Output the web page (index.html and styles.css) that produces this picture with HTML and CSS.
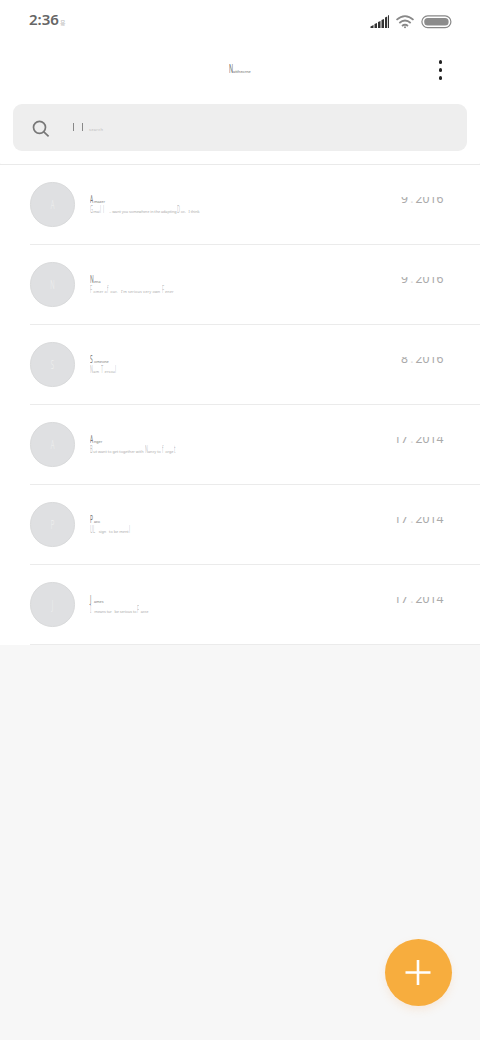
FILE: index.html
```
<!DOCTYPE html>
<html lang="en">
<head>
<meta charset="utf-8">
<title>Notes</title>
<link rel="stylesheet" href="styles.css">
</head>
<body>
<div class="status">
  <div class="time">2:36<small>용</small></div>
  <svg class="status-icons" width="82" height="16" viewBox="0 0 82 16">
    <path class="signal" d="M.500 14v-1.500l3-1.500v3zM4.500 14v-4l2.500-1v5zM8 14V8l2.500-1v7zM11.500 14V6l2.500-1v9zM15 14V3.500l2.200-1V14zM18 14V1.500l1-.5V14z"/>
    <g class="wifi"><path d="M26.500 5.800q8.500-7.500 17 0M29.300 9q5.700-5 11.400 0M32 12q3-2.500 6 0"/><circle cx="35" cy="13.300" r="1"/></g>
    <rect class="battery" x="51.900" y="1.900" width="29" height="11.700" rx="5.800"/>
    <rect class="charge" x="54.200" y="4" width="24.400" height="7.600" rx="3.500"/>
  </svg>
</div>
<header class="header">
  <h1 class="title tiny"><i>N</i>attheorne</h1>
  <div class="more"><b></b><b></b><b></b></div>
</header>
<div class="search">
  <svg width="18" height="18" viewBox="0 0 18 18"><circle cx="7.500" cy="7.300" r="6"/><path d="M11.800 11.800l4.800 4.600"/></svg>
  <div class="query"><b></b><b></b><span>search</span></div>
</div>
<main class="list">
  <article class="row"><div class="avatar"><span>A</span></div><div class="text"><div class="name tiny"><i>A</i>mazer</div><div class="note tiny w1"><i>G</i>mai<i>l</i><i>l</i> &nbsp; .. want you somewhere in the adapting <i>D</i>oc. &nbsp; I think</div></div><time><span>9 <em>.</em> 2016</span></time></article>
  <article class="row"><div class="avatar"><span>N</span></div><div class="text"><div class="name tiny"><i>N</i>ena</div><div class="note tiny w2"><i>F</i>omer o<i>f</i>our. &nbsp; I'm serious very own <i>F</i>ener</div></div><time><span>9 <em>.</em> 2016</span></time></article>
  <article class="row"><div class="avatar"><span>S</span></div><div class="text"><div class="name tiny"><i>S</i>omeone</div><div class="note tiny w3"><i>N</i>am &nbsp;<i>T</i>ersou<i>l</i></div></div><time><span>8 <em>.</em> 2016</span></time></article>
  <article class="row"><div class="avatar"><span>A</span></div><div class="text"><div class="name tiny"><i>A</i>nger</div><div class="note tiny w4"><i>B</i>ut want to get together with <i>N</i>ancy to <i>f</i>orge<i>t</i></div></div><time><span>17 <em>.</em> 2014</span></time></article>
  <article class="row"><div class="avatar"><span>P</span></div><div class="text"><div class="name tiny"><i>P</i>aco</div><div class="note tiny w5"><i>U</i><i>L</i> &nbsp;sign &nbsp; to be ment<i>l</i></div></div><time><span>17 <em>.</em> 2014</span></time></article>
  <article class="row"><div class="avatar"><span>J</span></div><div class="text"><div class="name tiny"><i>J</i>ames</div><div class="note tiny w6"><i>I</i> means tur &nbsp; be serious to <i>F</i>acce</div></div><time><span>17 <em>.</em> 2014</span></time></article>
</main>
<button class="add" aria-label="Add"><svg width="27" height="27" viewBox="0 0 27 27"><path d="M13 1v25M.500 13.500h25"/></svg></button>
</body>
</html>
```
FILE: styles.css
```
* { box-sizing: border-box; }
body { margin: 0; height: 1040px; overflow: hidden; background: #f7f7f7; font-family: "Noto Sans", "Noto Sans CJK KR", sans-serif; }
.status { height: 44px; padding: 0 28px 0 29px; display: flex; justify-content: space-between; background: #fff; }
.time { padding-top: 9px; font-size: 15px; line-height: 20px; font-weight: 600; color: #666; }
.time small { font-family: "Noto Sans CJK KR", sans-serif; font-size: 6px; font-weight: 400; color: #bbb; margin-left: 1px; }
.status-icons { margin-top: 14px; }
.signal { fill: #333; }
.wifi { fill: #888; }
.wifi path { fill: none; stroke: #888; stroke-width: 1.7; }
.battery { fill: none; stroke: #888; stroke-width: 1.2; }
.charge { fill: #8c8c8c; }
.header { height: 60px; display: grid; grid-template-columns: 1fr 22px 1fr; background: #fff; }
.tiny { margin: 0; white-space: nowrap; font-size: 3.8px; font-weight: 400; }
.tiny i { display: inline-block; width: 4px; font-style: normal; font-size: 11px; transform: scaleX(.45); transform-origin: left; }
.title { grid-column: 2; height: 20px; margin-top: 15px; line-height: 20px; color: #666; }
.title i { width: 4px; font-size: 12px; transform: scaleX(.45); }
.more { justify-self: end; width: 4px; height: 20px; margin: 16px 37.5px 0 0; display: flex; flex-direction: column; justify-content: space-between; }
.more b { width: 3.6px; height: 3.6px; border-radius: 50%; background: #222; }
.search { height: 47px; margin: 0 13px; padding: 0 19px; display: flex; align-items: center; gap: 22px; background: #eee; border-radius: 9px; box-shadow: 0 0 0 20px #fff; position: relative; }
.search svg { fill: none; stroke: #777; stroke-width: 1.7; margin-top: 2px; }
.query { height: 8px; display: flex; margin: -2px 0 0 1px; }
.query b { width: 1px; height: 8px; margin-right: 8px; background: #888; }
.query span { align-self: flex-end; font-size: 4px; line-height: 2px; color: #bbb; margin-left: -2px; letter-spacing: .3px; }
.list { position: relative; margin-top: 13px; background: #fff; border-top: 1px solid #eaeaea; }
.row { height: 80px; padding-left: 30px; display: flex; background: linear-gradient(#ebebeb, #ebebeb) 30px 79px / 450px 1px no-repeat; }
.avatar { width: 44.5px; height: 44.5px; margin: 17.3px 0 0 .4px; display: grid; place-items: center; border-radius: 50%; border: 1px solid #d9dadb; background: #dfe0e2; color: #f0f0f0; font-size: 12px; font-weight: 300; }
.avatar span { transform: scaleX(.5); }
.text { flex: 1; padding: 27px 0 0 15px; }
.name { height: 11px; line-height: 13px; color: #777; }
.note { height: 13px; line-height: 13px; color: #aaa; }
.note i { width: 3.4px; font-size: 10px; font-weight: 300; transform: scaleX(.4); }
.w1 { letter-spacing: -.06px; }
.w2 { letter-spacing: .14px; }
.w3 { letter-spacing: .04px; }
.w6 { letter-spacing: -.08px; }
time { height: 7px; margin: 32px 36.5px 0 0; overflow: hidden; font-size: 12.2px; color: #aaa; }
time span { display: block; margin-top: -6px; line-height: 16px; }
time em { color: #ddd; font-style: normal; margin: 0 -1px; }
.add { position: absolute; left: 385px; top: 938.5px; width: 67px; height: 67px; padding: 0; display: grid; place-items: center; border: 0; border-radius: 50%; background: #f7ad3e; box-shadow: 0 4px 9px rgba(247,160,80,.15); }
.add path { stroke: #fff; stroke-width: 2.6; }
```
